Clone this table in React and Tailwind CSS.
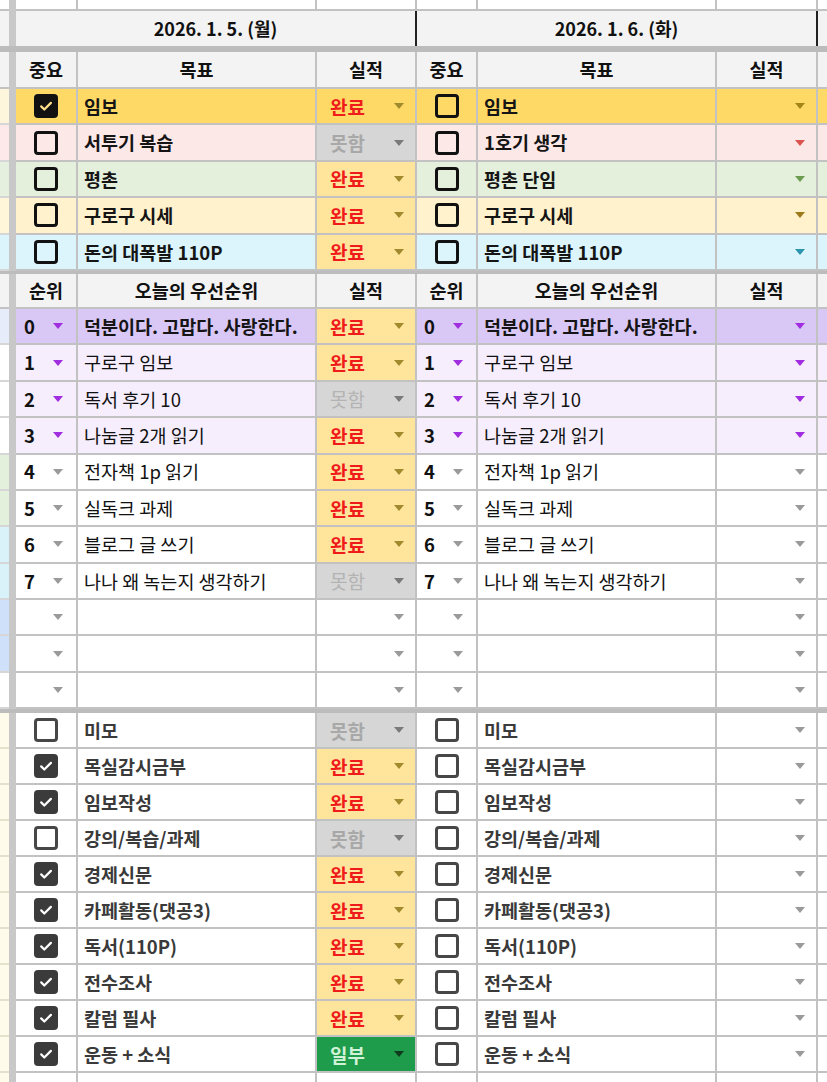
import React from "react";

const GRID =
  "grid grid-cols-[9px_7px_62px_239px_100px_61px_239px_101px_9px] font-['Noto_Sans_CJK_KR','Noto_Sans',sans-serif]";
const LINE = "border-r-2 border-b-2 border-[#c2c2c2]";

const STATUS = {
  완료: { bg: "bg-[#ffe49c]", text: "text-[#ef1b1b] font-bold", arrow: "#a08a2e" },
  못함: { bg: "bg-[#d6d6d6]", text: "text-[#a8a8a8] font-bold", arrow: "#7a7a7a" },
  일부: { bg: "bg-[#1f9b4c]", text: "text-[#d2f2d8] font-bold", arrow: "#0f3a1d" },
};

const PURPLE = "#a02ee0";
const GRAY = "#9a9a9a";

const goalsLeft = [
  { text: "임보", checked: true, bg: "bg-[#ffd966]", status: "완료", statusBg: "bg-[#ffd966]" },
  { text: "서투기 복습", bg: "bg-[#fde8e8]", status: "못함" },
  { text: "평촌", bg: "bg-[#e4efdc]", status: "완료" },
  { text: "구로구 시세", bg: "bg-[#fff2cc]", status: "완료" },
  { text: "돈의 대폭발 110P", bg: "bg-[#dcf5fc]", status: "완료" },
];

const goalsRight = [
  { text: "임보", bg: "bg-[#ffd966]", arrow: "#a38419" },
  { text: "1호기 생각", bg: "bg-[#fde8e8]", arrow: "#d9534f" },
  { text: "평촌 단임", bg: "bg-[#e4efdc]", arrow: "#6b9b50" },
  { text: "구로구 시세", bg: "bg-[#fff2cc]", arrow: "#9c7b1c" },
  { text: "돈의 대폭발 110P", bg: "bg-[#dcf5fc]", arrow: "#2e93ad" },
];

const goalStrip = ["bg-[#fef6dc]", "bg-[#fde9e9]", "bg-[#e6f0df]", "bg-[#fff6da]", "bg-[#dcf4fb]"];

const priorities = [
  { n: "0", text: "덕분이다. 고맙다. 사랑한다.", bg: "bg-[#d9c7f6]", purple: true, bold: true, status: "완료", strip: "bg-[#e6ecfa]" },
  { n: "1", text: "구로구 임보", bg: "bg-[#f6eefd]", purple: true, status: "완료", strip: "bg-white" },
  { n: "2", text: "독서 후기 10", bg: "bg-[#f6eefd]", purple: true, status: "못함", strip: "bg-white" },
  { n: "3", text: "나눔글 2개 읽기", bg: "bg-[#f6eefd]", purple: true, status: "완료", strip: "bg-white" },
  { n: "4", text: "전자책 1p 읽기", bg: "bg-white", status: "완료", strip: "bg-[#e3f0dc]" },
  { n: "5", text: "실독크 과제", bg: "bg-white", status: "완료", strip: "bg-[#e3f0dc]" },
  { n: "6", text: "블로그 글 쓰기", bg: "bg-white", status: "완료", strip: "bg-[#d9f1f8]" },
  { n: "7", text: "나나 왜 녹는지 생각하기", bg: "bg-white", status: "못함", strip: "bg-[#d9f1f8]" },
  { n: "", text: "", bg: "bg-white", strip: "bg-[#cfe0fa]" },
  { n: "", text: "", bg: "bg-white", strip: "bg-[#cfe0fa]" },
  { n: "", text: "", bg: "bg-white", strip: "bg-white" },
];

const habits = [
  { text: "미모", checked: false, status: "못함" },
  { text: "목실감시금부", checked: true, status: "완료" },
  { text: "임보작성", checked: true, status: "완료" },
  { text: "강의/복습/과제", checked: false, status: "못함" },
  { text: "경제신문", checked: true, status: "완료" },
  { text: "카페활동(댓공3)", checked: true, status: "완료" },
  { text: "독서(110P)", checked: true, status: "완료" },
  { text: "전수조사", checked: true, status: "완료" },
  { text: "칼럼 필사", checked: true, status: "완료" },
  { text: "운동 + 소식", checked: true, status: "일부" },
];

function Tri({ color }) {
  return (
    <svg width="10" height="6" viewBox="0 0 10 6" className="shrink-0">
      <path d="M0 0h10L5 6z" fill={color} />
    </svg>
  );
}

function Check({ color }) {
  return (
    <svg width="16" height="16" viewBox="0 0 16 16">
      <path
        d="M3.2 8.4l3.1 3.1L12.9 4.9"
        fill="none"
        stroke={color}
        strokeWidth="2.2"
        strokeLinecap="round"
        strokeLinejoin="round"
      />
    </svg>
  );
}

function TopBox({ checked }) {
  if (checked) {
    return (
      <div className="w-[24px] h-[24px] rounded-[4px] bg-[#111] flex items-center justify-center">
        <Check color="#ffe08a" />
      </div>
    );
  }
  return <div className="w-[24px] h-[24px] rounded-[4px] border-[3px] border-[#111]" />;
}

function HabitBox({ checked }) {
  if (checked) {
    return (
      <div className="w-[24px] h-[24px] rounded-[4px] bg-[#3b3b3b] flex items-center justify-center">
        <Check color="#ffffff" />
      </div>
    );
  }
  return <div className="w-[24px] h-[24px] rounded-[4px] border-[3px] border-[#474747] bg-white" />;
}

function Cell({ className = "", children }) {
  return <div className={`${LINE} flex items-center min-w-0 ${className}`}>{children}</div>;
}

function StatusCell({ status, bg, arrow, light }) {
  const s = STATUS[status];
  return (
    <Cell className={`justify-between pl-[13px] pr-[11px] ${s ? (bg || s.bg) : bg}`}>
      <span
        className={`text-[19px] leading-none ${s ? s.text : ""} ${light ? "!font-normal !text-[#b3b3b3]" : ""}`}
      >
        {s ? status : ""}
      </span>
      <Tri color={s ? s.arrow : arrow} />
    </Cell>
  );
}

function Bar() {
  return <div className="bg-[#c8c8c8]" />;
}

function Separator({ h }) {
  return <div className={`col-span-full bg-[#bcbcbc] ${h}`} />;
}

function NumCell({ n, bg, color, right }) {
  return (
    <Cell className={`justify-between pr-[13px] ${right ? "pl-[7px]" : "pl-[8px]"} ${bg}`}>
      <span className="text-[18.5px] leading-none font-bold text-[#111]">{n}</span>
      <Tri color={color} />
    </Cell>
  );
}

function TextCell({ text, bg, className = "" }) {
  return (
    <Cell className={`pl-[6px] ${bg}`}>
      <span className={`text-[18.5px] leading-none whitespace-nowrap ${className}`}>{text}</span>
    </Cell>
  );
}

function HeadCell({ text }) {
  return (
    <Cell className="justify-center bg-[#f3f3f3]">
      <span className="text-[18.5px] font-bold text-[#111]">{text}</span>
    </Cell>
  );
}

export default function App() {
  return (
    <div className="w-[827px] h-[1082px] overflow-hidden bg-white">
      <div className={GRID}>
        {/* partial top row */}
        <div className="h-[11px] bg-white border-b-2 border-[#c2c2c2]" />
        <Bar />
        <div className={LINE} />
        <div className={LINE} />
        <div className={LINE} />
        <div className={LINE} />
        <div className={LINE} />
        <div className={LINE} />
        <div className="border-b-2 border-[#c2c2c2]" />

        {/* date header */}
        <div className="h-[35px] bg-[#f3f3f3]" />
        <Bar />
        <div className="col-span-3 bg-[#f3f3f3] border-r-2 border-[#222] flex items-center justify-center">
          <span className="text-[18px] font-bold text-[#111]">2026. 1. 5. (월)</span>
        </div>
        <div className="col-span-3 bg-[#f3f3f3] border-r-2 border-[#222] flex items-center justify-center">
          <span className="text-[18px] font-bold text-[#111]">2026. 1. 6. (화)</span>
        </div>
        <div className="bg-[#f3f3f3]" />

        <Separator h="h-[6px]" />

        {/* goal header */}
        <div className="h-[37px] bg-[#f3f3f3] border-b-2 border-[#c2c2c2]" />
        <Bar />
        {["중요", "목표", "실적", "중요", "목표", "실적"].map((t, i) => (
          <HeadCell key={i} text={t} />
        ))}
        <div className="bg-[#f3f3f3] border-b-2 border-[#c2c2c2]" />

        {/* goals */}
        {goalsLeft.map((g, i) => {
          const r = goalsRight[i];
          return (
            <React.Fragment key={i}>
              <div className={`h-[36.4px] border-b-2 border-[#d6d6d6] ${goalStrip[i]}`} />
              <Bar />
              <Cell className={`justify-center ${g.bg}`}>
                <TopBox checked={g.checked} />
              </Cell>
              <TextCell text={g.text} bg={g.bg} className="font-bold text-[#151515]" />
              <StatusCell status={g.status} bg={g.statusBg} />
              <Cell className={`justify-center ${r.bg}`}>
                <TopBox />
              </Cell>
              <TextCell text={r.text} bg={r.bg} className="font-bold text-[#151515]" />
              <StatusCell bg={r.bg} arrow={r.arrow} />
              <div className={`border-b-2 border-[#c2c2c2] ${r.bg}`} />
            </React.Fragment>
          );
        })}

        <Separator h="h-[3px]" />

        {/* priority header */}
        <div className="h-[35px] bg-[#f3f3f3] border-b-2 border-[#c2c2c2]" />
        <Bar />
        {["순위", "오늘의 우선순위", "실적", "순위", "오늘의 우선순위", "실적"].map((t, i) => (
          <HeadCell key={i} text={t} />
        ))}
        <div className="bg-[#f3f3f3] border-b-2 border-[#c2c2c2]" />

        {/* priorities */}
        {priorities.map((p, i) => {
          const arrow = p.purple ? PURPLE : GRAY;
          const weight = p.bold ? "font-bold text-[#151515]" : "font-normal text-[#111]";
          return (
            <React.Fragment key={i}>
              <div className={`h-[36.4px] border-b-2 border-[#d6d6d6] ${p.strip}`} />
              <Bar />
              <NumCell n={p.n} bg={p.bg} color={arrow} />
              <TextCell text={p.text} bg={p.bg} className={weight} />
              <StatusCell
                status={p.status}
                bg={p.status ? undefined : "bg-white"}
                arrow={GRAY}
                light={p.status === "못함"}
              />
              <NumCell n={p.n} bg={p.bg} color={arrow} right />
              <TextCell text={p.text} bg={p.bg} className={weight} />
              <StatusCell bg={p.bg} arrow={arrow} />
              <div className={`border-b-2 border-[#c2c2c2] ${p.bg}`} />
            </React.Fragment>
          );
        })}

        <Separator h="h-[4px]" />

        {/* habits */}
        {habits.map((h, i) => (
          <React.Fragment key={i}>
            <div className="h-[36px] bg-[#fffbea] border-b-2 border-[#e6e1cc]" />
            <Bar />
            <Cell className="justify-center bg-white">
              <HabitBox checked={h.checked} />
            </Cell>
            <TextCell text={h.text} bg="bg-white" className="font-semibold text-[#3a3a3a]" />
            <StatusCell status={h.status} />
            <Cell className="justify-center bg-white">
              <HabitBox />
            </Cell>
            <TextCell text={h.text} bg="bg-white" className="font-semibold text-[#3a3a3a]" />
            <StatusCell bg="bg-white" arrow={GRAY} />
            <div className="border-b-2 border-[#c2c2c2] bg-white" />
          </React.Fragment>
        ))}

        {/* partial bottom row */}
        <div className="h-[9px] bg-[#fffbea]" />
        <Bar />
        <div className="border-r-2 border-[#c2c2c2]" />
        <div className="border-r-2 border-[#c2c2c2]" />
        <div className="border-r-2 border-[#c2c2c2]" />
        <div className="border-r-2 border-[#c2c2c2]" />
        <div className="border-r-2 border-[#c2c2c2]" />
        <div className="border-r-2 border-[#c2c2c2]" />
        <div />
      </div>
    </div>
  );
}
